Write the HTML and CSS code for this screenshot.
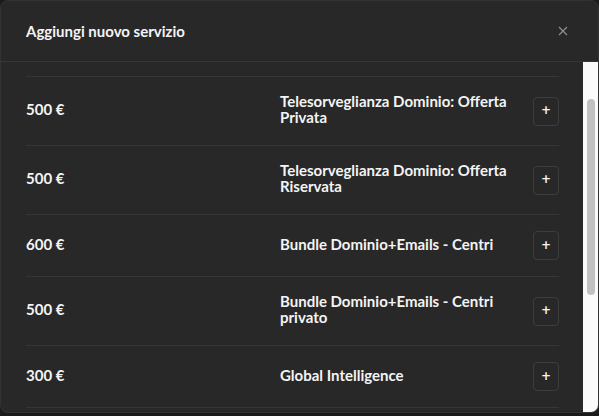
FILE: index.html
```html
<!DOCTYPE html>
<html lang="it">
<head>
<meta charset="utf-8">
<title>Aggiungi nuovo servizio</title>
<link rel="stylesheet" href="styles.css">
</head>
<body>
<div class="modal">
  <header class="modal-header">
    <h2 class="modal-title">Aggiungi nuovo servizio</h2>
    <button class="close" aria-label="Chiudi">
      <svg width="10" height="10" viewBox="0 0 10 10"><path d="M1 1L9 9M9 1L1 9" stroke="currentColor" stroke-width="1.2" fill="none"/></svg>
    </button>
  </header>
  <div class="modal-body">
    <div class="list">
      <div class="row">
        <div class="price">500 €</div>
        <div class="name">Telesorveglianza Dominio: Offerta Privata</div>
        <button class="add">+</button>
      </div>
      <div class="row">
        <div class="price">500 €</div>
        <div class="name">Telesorveglianza Dominio: Offerta Riservata</div>
        <button class="add">+</button>
      </div>
      <div class="row">
        <div class="price">600 €</div>
        <div class="name">Bundle Dominio+Emails - Centri</div>
        <button class="add">+</button>
      </div>
      <div class="row">
        <div class="price">500 €</div>
        <div class="name">Bundle Dominio+Emails - Centri privato</div>
        <button class="add">+</button>
      </div>
      <div class="row">
        <div class="price">300 €</div>
        <div class="name">Global Intelligence</div>
        <button class="add">+</button>
      </div>
      <div class="row row-end"></div>
    </div>
    <div class="scrollbar"><div class="thumb"></div></div>
  </div>
</div>
</body>
</html>
```

FILE: styles.css
```css
* { box-sizing: border-box; }
html, body { margin: 0; height: 100%; }
body {
  background: #1b1b1b;
  font-family: "Lato", "Inter", sans-serif;
  color: #f4f4f4;
}
.modal {
  width: 599px;
  height: 413px;
  background: #282828;
  border: 1px solid #333;
  border-radius: 8px;
  display: flex;
  flex-direction: column;
  overflow: hidden;
}
.modal-header {
  height: 61px;
  flex: none;
  display: flex;
  align-items: center;
  justify-content: space-between;
  padding: 0 30px 0 25px;
  border-bottom: 1px solid #363636;
}
.modal-title {
  margin: 0;
  font-size: 15px;
  font-weight: 700;
  color: #f4f4f4;
}
.close {
  background: none;
  border: 0;
  padding: 0;
  color: #8f8f8f;
  display: flex;
}
.modal-body {
  flex: 1;
  display: flex;
  min-height: 0;
}
.list {
  flex: 1;
  overflow: hidden;
  padding: 14px 24px 0 25px;
}
.row {
  display: grid;
  grid-template-columns: 238px 1fr 26px;
  column-gap: 16px;
  align-items: center;
  padding: 16px 0;
  border-top: 1px solid #363636;
}
.row-end { padding: 0; }
.price {
  font-size: 15px;
  font-weight: 700;
  padding-bottom: 4px;
}
.name {
  font-size: 15px;
  font-weight: 700;
  line-height: 16px;
  padding: 0 0 4px;
}
.add {
  width: 26px;
  height: 29px;
  background: transparent;
  border: 1px solid #3d3d3d;
  border-radius: 4px;
  color: #f4f4f4;
  font-family: "DejaVu Sans", sans-serif;
  font-size: 12px;
  font-weight: 700;
  padding: 0 0 2px;
  line-height: 1;
}
.scrollbar {
  width: 15px;
  flex: none;
  background: #fafafa;
  padding: 37px 3px 0 4px;
}
.thumb {
  height: 196px;
  background: #c1c1c1;
  border-radius: 4px;
}
```
